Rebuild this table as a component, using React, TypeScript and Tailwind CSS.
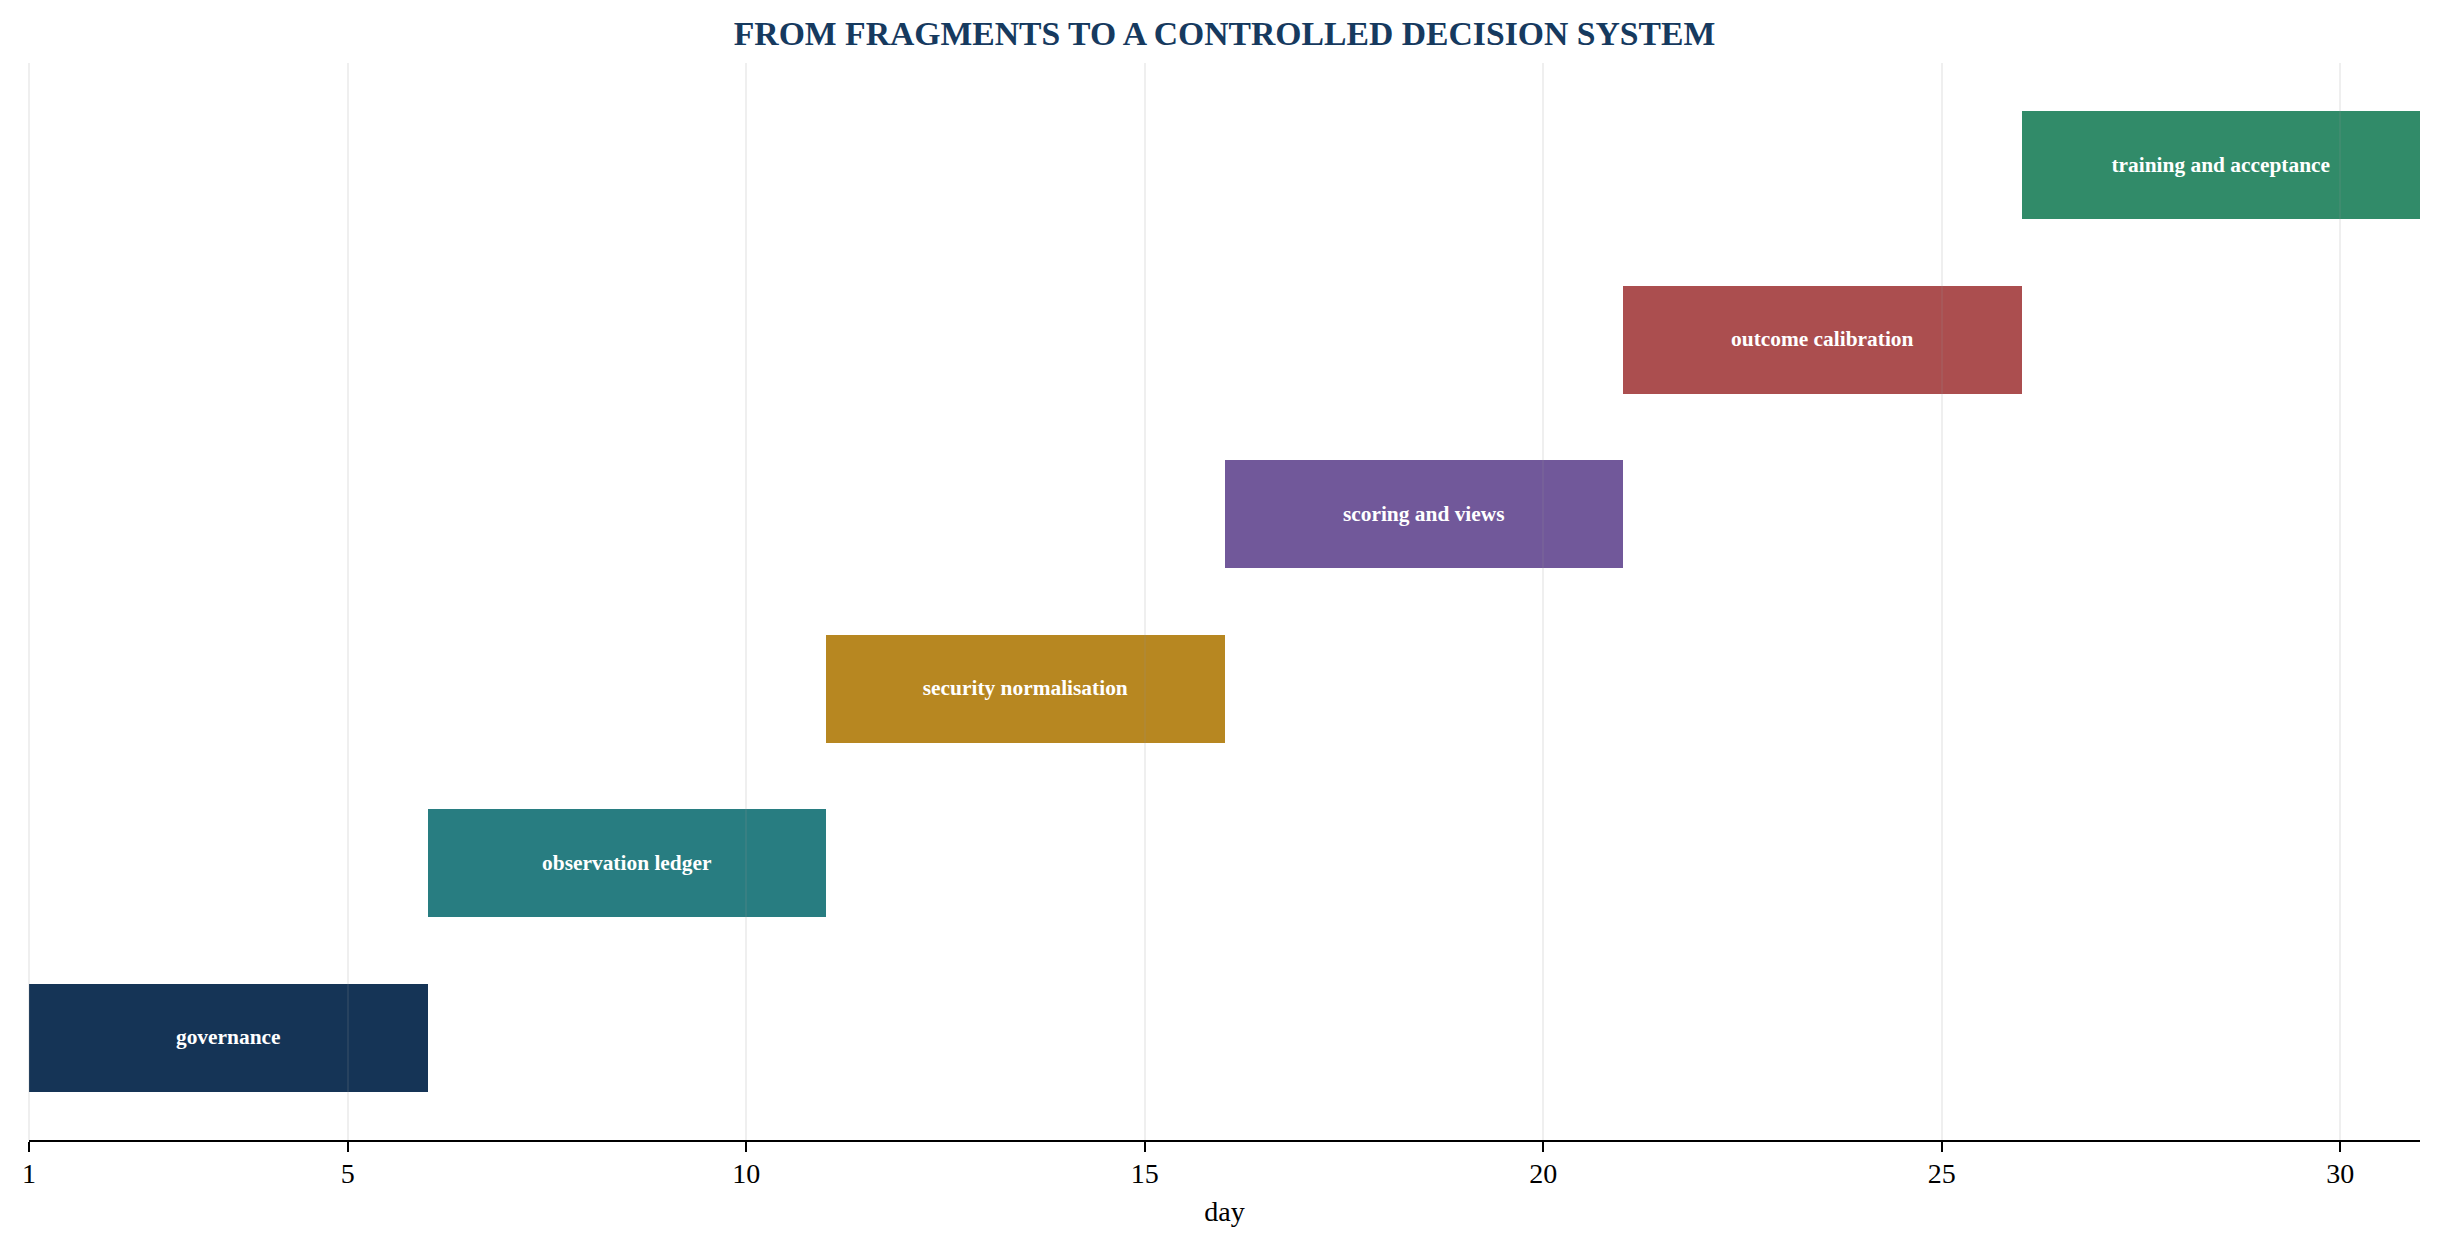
const tasks = [
  { label: "training and acceptance", col: "col-start-26", row: "row-start-1", color: "bg-[#318b69]" },
  { label: "outcome calibration", col: "col-start-21", row: "row-start-2", color: "bg-[#ab4e4f]" },
  { label: "scoring and views", col: "col-start-16", row: "row-start-3", color: "bg-[#71589a]" },
  { label: "security normalisation", col: "col-start-11", row: "row-start-4", color: "bg-[#b78721]" },
  { label: "observation ledger", col: "col-start-6", row: "row-start-5", color: "bg-[#287d81]" },
  { label: "governance", col: "col-start-1", row: "row-start-6", color: "bg-[#153456]" },
];

const ticks = [
  { day: "1", left: "left-[0%]" },
  { day: "5", left: "left-[13.333%]" },
  { day: "10", left: "left-[30%]" },
  { day: "15", left: "left-[46.667%]" },
  { day: "20", left: "left-[63.333%]" },
  { day: "25", left: "left-[80%]" },
  { day: "30", left: "left-[96.667%]" },
];

export default function App() {
  return (
    <div className="h-[1250px] w-[2441px] overflow-hidden bg-white font-['Liberation_Serif','Times_New_Roman',serif] text-black">
      <div className="h-[63px] pl-[29px] pr-[21px] pt-[17px]">
        <h1 className="text-center text-[33.7px] font-bold leading-[34px] text-[#163a5f]">
          FROM FRAGMENTS TO A CONTROLLED DECISION SYSTEM
        </h1>
      </div>

      <div className="ml-[29px] w-[2391px]">
        {/* plot area */}
        <div className="relative h-[1077px]">
          <div className="grid h-full grid-cols-30 grid-rows-6 py-[15px]">
            {tasks.map((t) => (
              <div
                key={t.label}
                className={`${t.col} ${t.row} col-span-5 flex h-[108px] items-center justify-center self-center ${t.color}`}
              >
                <span className="text-[21.4px] font-bold leading-none text-white">{t.label}</span>
              </div>
            ))}
          </div>
          {ticks.map((t) => (
            <div
              key={t.day}
              className={`pointer-events-none absolute inset-y-0 w-[2px] -translate-x-1/2 bg-[rgba(148,148,148,0.15)] ${t.left}`}
            />
          ))}
        </div>

        {/* x axis */}
        <div className="relative h-[48px] border-t-2 border-black">
          {ticks.map((t) => (
            <div key={t.day} className={`absolute top-0 flex -translate-x-1/2 flex-col items-center ${t.left}`}>
              <div className="h-[10px] w-[2px] bg-black" />
              <span className="mt-[8px] text-[28px] leading-[28px]">{t.day}</span>
            </div>
          ))}
        </div>
        <div className="mt-[10px] text-center text-[28px] leading-[28px]">day</div>
      </div>
    </div>
  );
}
